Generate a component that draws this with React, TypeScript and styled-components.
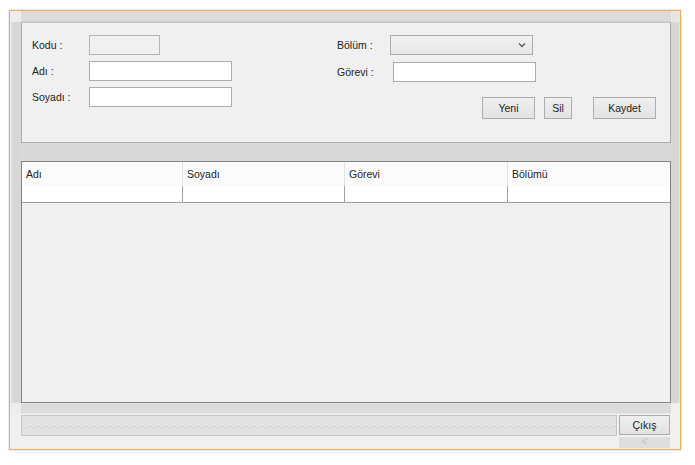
import React from "react";
import styled, { createGlobalStyle } from "styled-components";

const Global = createGlobalStyle`
  html, body { margin: 0; padding: 0; background: #ffffff; }
  body {
    font-family: "Liberation Sans", Arial, sans-serif;
    font-size: 10.5px;
    color: #222222;
  }
  * { box-sizing: border-box; }
`;

const Page = styled.div`
  width: 695px;
  height: 465px;
  padding: 10px 0 0 9px;
`;

const Window = styled.div`
  width: 672px;
  height: 440px;
  border: 1px solid #f0ad55;
  box-shadow: 0 0 0 1px #ececf6;
  background: #f0f0f0;
  display: grid;
  grid-template-columns: 11px 650px 9px;
  grid-template-rows: 11px 381px 11px 35px;
`;

const Corner = styled.div<{ $tone?: string }>`
  background: ${(p) => p.$tone || "#eeeeee"};
`;

const HStrip = styled.div`
  background: #dbdbdb;
  border-bottom: 1px solid #d0d0d0;
`;

const BottomStrip = styled.div`
  background: #dcdcdc;
  border-top: 1px solid #e6e6e6;
  border-bottom: 1px solid #e9e9e9;
`;

const SideBar = styled.div<{ $side: "left" | "right" }>`
  background: #d7d7d7;
  ${(p) =>
    p.$side === "left"
      ? "border-left: 2px solid #e9e9e9;"
      : "border-right: 1px solid #e4e4e4;"}
`;

const Content = styled.div`
  display: flex;
  flex-direction: column;
`;

const FormPanel = styled.div`
  height: 121px;
  border: 1px solid #ababab;
  border-top-color: #c4c4c4;
  background: #f0f0f0;
  display: flex;
  padding: 12px 14px 0 10px;
`;

const LeftGroup = styled.div`
  width: 305px;
  display: flex;
  flex-direction: column;
  gap: 6px;
`;

const RightGroup = styled.div`
  flex: 1;
  display: flex;
  flex-direction: column;
`;

const Field = styled.div<{ $gapTop?: number }>`
  display: flex;
  align-items: center;
  height: 20px;
  margin-top: ${(p) => p.$gapTop || 0}px;
`;

const Label = styled.span<{ $w: number }>`
  width: ${(p) => p.$w}px;
  flex: none;
  white-space: nowrap;
`;

const TextBox = styled.div<{ $w: number; $disabled?: boolean }>`
  width: ${(p) => p.$w}px;
  height: 20px;
  border: 1px solid ${(p) => (p.$disabled ? "#b5b5b5" : "#abadb3")};
  background: ${(p) => (p.$disabled ? "#f0f0f0" : "#ffffff")};
`;

const Select = styled.div`
  width: 143px;
  height: 20px;
  border: 1px solid #acacac;
  background: linear-gradient(#f2f2f2, #e6e6e6);
  display: flex;
  align-items: center;
  justify-content: flex-end;
  padding-right: 6px;
`;

const ButtonRow = styled.div`
  display: flex;
  justify-content: flex-end;
  margin-top: 15px;
`;

const Button = styled.div<{ $w: number; $ml?: number; $h?: number }>`
  width: ${(p) => p.$w}px;
  height: ${(p) => p.$h || 22}px;
  margin-left: ${(p) => p.$ml || 0}px;
  border: 1px solid #adadad;
  background: linear-gradient(#efefef, #e2e2e2);
  display: flex;
  align-items: center;
  justify-content: center;
  white-space: nowrap;
`;

const MidStrip = styled.div`
  height: 18px;
  background: #d9d9d9;
`;

const Table = styled.div`
  height: 242px;
  border: 1px solid #828282;
  background: #f0f0f0;
  display: flex;
  flex-direction: column;
`;

const Row = styled.div<{ $head?: boolean }>`
  display: grid;
  grid-template-columns: 161px 162px 163px 162px;
  height: ${(p) => (p.$head ? 24 : 17)}px;
  background: ${(p) => (p.$head ? "#fbfbfb" : "#ffffff")};
  ${(p) => (p.$head ? "" : "border-bottom: 1px solid #a0a0a0;")}
`;

const Cell = styled.div<{ $head?: boolean; $last?: boolean }>`
  display: flex;
  align-items: center;
  padding-left: 4px;
  border-right: ${(p) =>
    p.$last ? "none" : `1px solid ${p.$head ? "#e3e3e3" : "#a0a0a0"}`};
`;

const Footer = styled.div`
  display: flex;
  gap: 2px;
  padding-top: 1px;
`;

const Progress = styled.div`
  width: 596px;
  height: 21px;
  border: 1px solid #c6c6c6;
  background: #e1e1e1;
  display: flex;
  align-items: center;
  overflow: hidden;
`;

const ButtonStack = styled.div`
  width: 51px;
  display: flex;
  flex-direction: column;
  gap: 2px;
`;

const ScrollNub = styled.div`
  height: 11px;
  background: #dedede;
  color: #c4c4c4;
  font-size: 10px;
  line-height: 10px;
  text-align: center;
`;

const columns = ["Adı", "Soyadı", "Görevi", "Bölümü"];

function Zigzag() {
  const pts: string[] = [];
  for (let x = 0; x <= 600; x += 4) {
    pts.push(`${x},${(x / 4) % 2 === 0 ? 2 : 5}`);
  }
  const p = pts.join(" ");
  return (
    <svg width="594" height="8" viewBox="0 0 594 8">
      <polyline points={p} fill="none" stroke="#cfcfcf" strokeWidth="1" transform="translate(0,1)" />
      <polyline points={p} fill="none" stroke="#eeeeee" strokeWidth="1" />
    </svg>
  );
}

export default function App() {
  return (
    <>
      <Global />
      <Page>
        <Window>
          <Corner $tone="#ededed" />
          <HStrip />
          <Corner $tone="#e6e6e6" />

          <SideBar $side="left" />
          <Content>
            <FormPanel>
              <LeftGroup>
                <Field>
                  <Label $w={57}>Kodu :</Label>
                  <TextBox $w={71} $disabled />
                </Field>
                <Field>
                  <Label $w={57}>Adı :</Label>
                  <TextBox $w={143} />
                </Field>
                <Field>
                  <Label $w={57}>Soyadı :</Label>
                  <TextBox $w={143} />
                </Field>
              </LeftGroup>
              <RightGroup>
                <Field>
                  <Label $w={53}>Bölüm :</Label>
                  <Select>
                    <svg width="8" height="6" viewBox="0 0 8 6">
                      <polyline points="1,1.5 4,4.5 7,1.5" fill="none" stroke="#555" strokeWidth="1.3" />
                    </svg>
                  </Select>
                </Field>
                <Field $gapTop={7}>
                  <Label $w={56}>Görevi :</Label>
                  <TextBox $w={143} />
                </Field>
                <ButtonRow>
                  <Button $w={53}>Yeni</Button>
                  <Button $w={28} $ml={9}>Sil</Button>
                  <Button $w={63} $ml={21}>Kaydet</Button>
                </ButtonRow>
              </RightGroup>
            </FormPanel>
            <MidStrip />
            <Table>
              <Row $head>
                {columns.map((c, i) => (
                  <Cell key={c} $head $last={i === columns.length - 1}>
                    {c}
                  </Cell>
                ))}
              </Row>
              <Row>
                {columns.map((c, i) => (
                  <Cell key={c} $last={i === columns.length - 1} />
                ))}
              </Row>
            </Table>
          </Content>
          <SideBar $side="right" />

          <Corner $tone="#ededed" />
          <BottomStrip />
          <Corner $tone="#f0f0f0" />

          <div />
          <Footer>
            <Progress>
              <Zigzag />
            </Progress>
            <ButtonStack>
              <Button $w={51} $h={20}>Çıkış</Button>
              <ScrollNub>&lt;</ScrollNub>
            </ButtonStack>
          </Footer>
          <div />
        </Window>
      </Page>
    </>
  );
}
